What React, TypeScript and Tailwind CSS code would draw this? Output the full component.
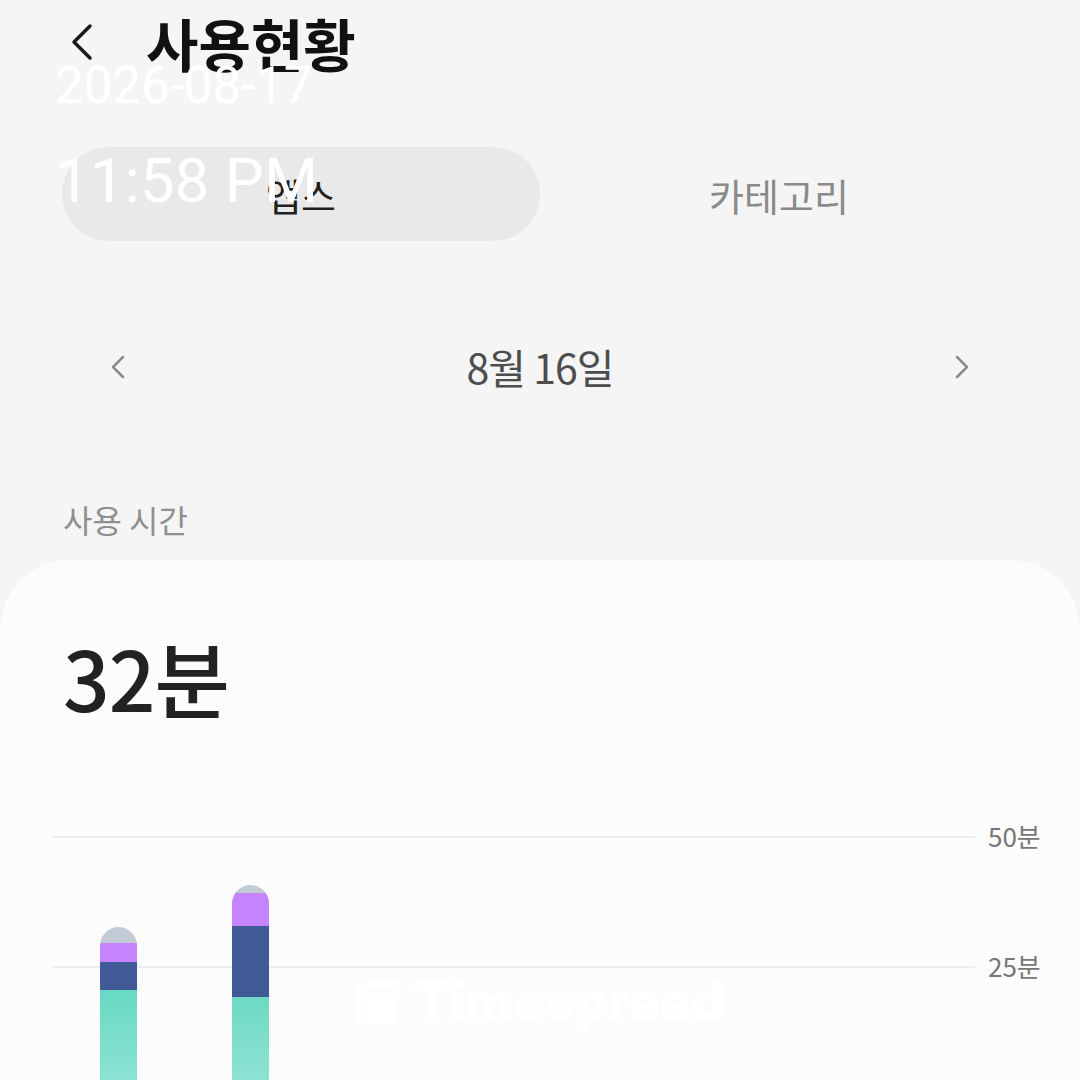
import { ChevronLeft, ChevronRight } from 'lucide-react';

const kr = { fontFamily: '"Noto Sans CJK KR", "Noto Sans", sans-serif' };

type Seg = { color: string; h: number };

const bars: Seg[][] = [
  [
    { color: 'bg-[#c2cad6]', h: 16 },
    { color: 'bg-[#c583fc]', h: 19 },
    { color: 'bg-[#3f5a96]', h: 28 },
    { color: 'bg-gradient-to-b from-[#66d9c2] to-[#92e4d5]', h: 106 },
  ],
  [
    { color: 'bg-[#c2cad6]', h: 8 },
    { color: 'bg-[#c583fc]', h: 33 },
    { color: 'bg-[#3f5a96]', h: 71 },
    { color: 'bg-gradient-to-b from-[#6dd9c4] to-[#92e4d5]', h: 99 },
  ],
];

function Bar({ segs }: { segs: Seg[] }) {
  return (
    <div className="flex w-[37px] flex-col overflow-hidden rounded-t-full">
      {segs.map((s, i) => (
        <div key={i} className={s.color} style={{ height: s.h }} />
      ))}
    </div>
  );
}

export default function App() {
  return (
    <div className="relative h-[1080px] w-[1080px] overflow-hidden bg-[#f5f5f5]" style={kr}>
      {/* header */}
      <div className="flex h-[84px] items-center">
        <ChevronLeft className="ml-[50px] h-[64px] w-[64px] text-[#1a1a1a]" strokeWidth={1.3} />
        <h1 className="ml-[32px] text-[57px] font-bold leading-none tracking-[0px] text-[#111]">사용현황</h1>
      </div>

      {/* tabs */}
      <div className="mt-[63px] grid h-[94px] grid-cols-2 px-[62px]">
        <div className="flex items-center justify-center rounded-full bg-[#e9e9e9] text-[38px] text-[#1f1f1f]">
          앱스
        </div>
        <div className="flex items-center justify-center text-[38px] text-[#8a8a8a]">카테고리</div>
      </div>

      {/* date nav */}
      <div className="mt-[86px] flex h-[80px] items-center justify-between px-[98px]">
        <ChevronLeft className="h-[40px] w-[40px] text-[#8a8a8a]" strokeWidth={1.5} />
        <div className="text-[41px] tracking-[-1px] text-[#4d4d4d]">8월 16일</div>
        <ChevronRight className="h-[40px] w-[40px] text-[#8a8a8a]" strokeWidth={1.5} />
      </div>

      {/* section label */}
      <div className="mt-[92px] flex h-[40px] items-center px-[63px] text-[32px] text-[#8f8f8f]">
        사용 시간
      </div>

      {/* card */}
      <div className="mt-[21px] h-[600px] rounded-t-[70px] bg-[#fcfcfc]">
        <div className="px-[63px] pt-[76px] text-[82px] font-medium leading-none tracking-[-1px] text-[#222]">
          32분
        </div>

        <div className="mt-[118px] flex">
          <div className="relative ml-[53px] h-[260px] w-[922px]">
            <div className="absolute left-0 right-0 top-0 h-[2px] bg-[#ececec]" />
            <div className="absolute left-0 right-0 top-[130px] h-[2px] bg-[#ececec]" />
            <div className="absolute inset-0 flex items-end gap-[95px] pl-[47px]">
              {bars.map((b, i) => (
                <Bar key={i} segs={b} />
              ))}
            </div>
            <div className="absolute left-[302px] top-[140px] flex items-center gap-[16px] text-white">
              <div className="flex gap-[3px]">
                <div className="flex flex-col gap-[3px]">
                  <div className="h-[9px] w-[9px] rounded-full bg-white" />
                  <div className="h-[31px] w-[9px] bg-white" />
                </div>
                <div className="flex flex-col gap-[3px]">
                  <div className="h-[9px] w-[31px] bg-white" />
                  <div className="h-[31px] w-[31px] bg-white" />
                </div>
              </div>
              <span className="text-[53px] font-black leading-none tracking-[-1px]" style={{ fontFamily: 'Inter, sans-serif' }}>
                Timespread
              </span>
            </div>
          </div>
          <div className="relative ml-[13px] flex-1 text-[26px] text-[#777]">
            <div className="absolute left-0 top-[-18px] leading-[36px]">50분</div>
            <div className="absolute left-0 top-[112px] leading-[36px]">25분</div>
          </div>
        </div>
      </div>

      {/* timestamp overlay */}
      <div
        className="pointer-events-none absolute left-[55px] top-[60px] text-white"
        style={{ fontFamily: 'Roboto, "Liberation Sans", sans-serif' }}
      >
        <div className="text-[51px] leading-none">2026-08-17</div>
        <div className="mt-[39px] text-[62px] leading-none">11:58 PM</div>
      </div>
    </div>
  );
}
